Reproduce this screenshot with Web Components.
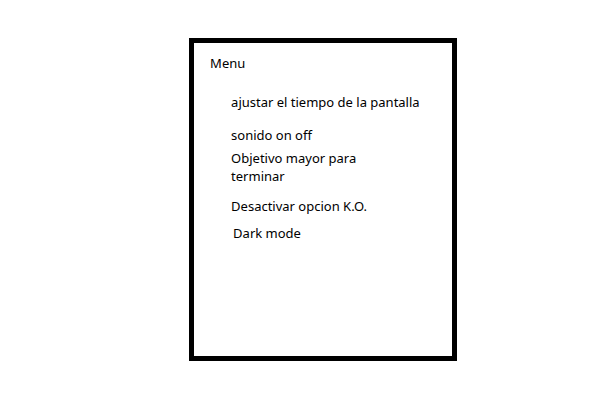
<!DOCTYPE html>
<html lang="es">
<head>
<meta charset="utf-8">
<title>Menu</title>
<style>
body { margin: 0; background: #fff; color: #000; font: 13px/18px "Noto Sans", "Open Sans", sans-serif; }
</style>
</head>
<body>
<menu-panel>
  <span slot="title">Menu</span>
  <menu-option style="--gap:21px">ajustar el tiempo de la pantalla</menu-option>
  <menu-option style="--gap:15px">sonido on off</menu-option>
  <menu-option style="--gap:5px; --measure:160px">Objetivo mayor para terminar</menu-option>
  <menu-option style="--gap:12px">Desactivar opcion K.O.</menu-option>
  <menu-option style="--gap:9px; --indent:2px">Dark mode</menu-option>
</menu-panel>
<script>
customElements.define('menu-panel', class extends HTMLElement {
  constructor() {
    super();
    this.attachShadow({ mode: 'open' }).innerHTML = `
      <style>
        :host { display: block; padding: 38px 25.1% 0 31%; }
        nav { box-sizing: border-box; min-height: 323px; border: 5px solid #000; padding: 11px 16px; }
        h1 { margin: 0; font: inherit; }
        .list { padding-left: 21px; }
      </style>
      <nav><h1><slot name="title"></slot></h1><div class="list" role="list"><slot></slot></div></nav>`;
  }
});
customElements.define('menu-option', class extends HTMLElement {
  constructor() {
    super();
    this.attachShadow({ mode: 'open' }).innerHTML = `
      <style>
        :host { display: block; max-width: var(--measure, none); padding: var(--gap) 0 0 var(--indent, 0); }
      </style>
      <slot></slot>`;
  }
  connectedCallback() { this.setAttribute('role', 'listitem'); }
});
</script>
</body>
</html>
